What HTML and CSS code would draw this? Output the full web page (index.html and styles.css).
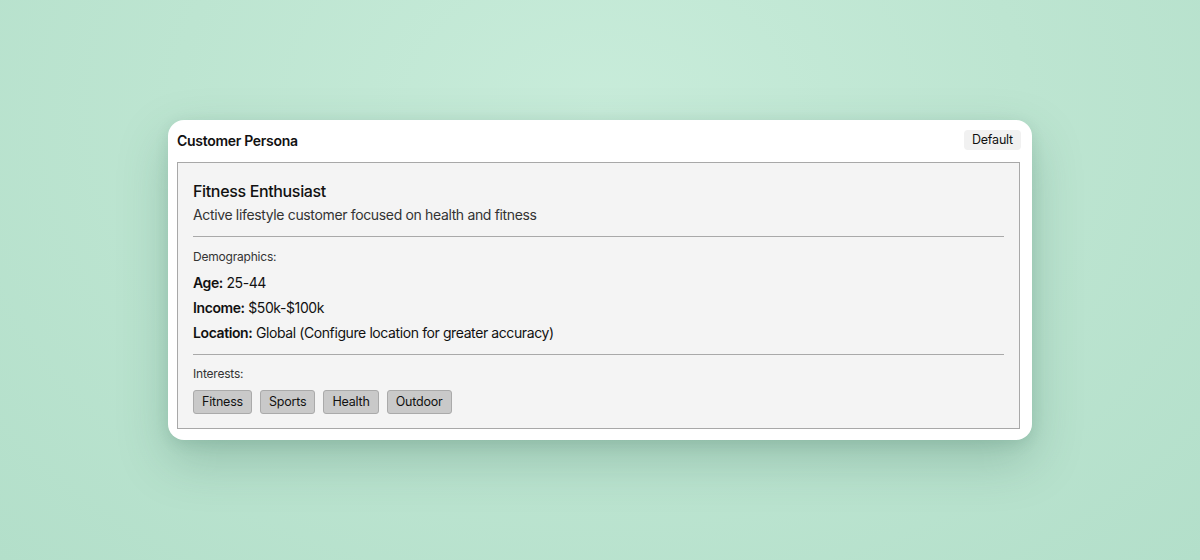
FILE: index.html
```html
<!DOCTYPE html>
<html>
<head>
<meta charset="utf-8">
<link rel="stylesheet" href="styles.css">
</head>
<body>
<div class="stage">
  <div class="card">
    <div class="card-head">
      <span class="title">Customer Persona</span>
      <span class="badge">Default</span>
    </div>
    <div class="panel">
      <div class="name">Fitness Enthusiast</div>
      <div class="desc">Active lifestyle customer focused on health and fitness</div>
      <hr class="rule">
      <div class="label">Demographics:</div>
      <div class="rows">
        <div class="row"><b>Age:</b> 25-44</div>
        <div class="row"><b>Income:</b> $50k-$100k</div>
        <div class="row"><b>Location:</b> Global (Configure location for greater accuracy)</div>
      </div>
      <hr class="rule">
      <div class="label">Interests:</div>
      <div class="tags">
        <span class="tag">Fitness</span>
        <span class="tag">Sports</span>
        <span class="tag">Health</span>
        <span class="tag">Outdoor</span>
      </div>
    </div>
  </div>
</div>
</body>
</html>
```
FILE: styles.css
```css
html, body { margin: 0; padding: 0; }
body {
  width: 1200px; height: 560px; overflow: hidden;
  font-family: Inter, "Noto Sans", sans-serif;
  color: #111;
  background: radial-gradient(ellipse at 50% 20%, #c8ecda 0%, #bde5d1 50%, #b3dfca 100%);
}
.stage {
  display: flex; justify-content: center;
  padding-top: 120px;
}
.card {
  width: 864px; height: 320px; box-sizing: border-box;
  background: #fff; border-radius: 16px;
  padding: 9px 12px 11px 9px;
  box-shadow: 0 20px 50px rgba(40, 90, 70, 0.25), 0 4px 14px rgba(40,90,70,0.12);
  display: flex; flex-direction: column;
}
.card-head {
  display: flex; justify-content: space-between; align-items: center;
  height: 22px; margin-bottom: 11px;
}
.title { font-size: 14px; font-weight: 600; letter-spacing: -0.3px; }
.badge {
  font-size: 12.5px; font-weight: 400; background: #f1f1f1;
  border-radius: 4px; padding: 2px 8px; line-height: 16px;
  margin-right: -1px; letter-spacing: -0.2px;
}
.panel {
  flex: 1; background: #f4f4f4; border: 1px solid #a8a8a8;
  padding: 17px 15px 0 15px;
}
.name { font-size: 16px; font-weight: 500; line-height: 22px; letter-spacing: -0.35px; }
.desc { font-size: 14px; color: #333; line-height: 20px; margin-top: 3px; letter-spacing: -0.35px; }
.rule { border: 0; border-top: 1px solid #a9a9a9; margin: 11px 0 11px; }
.label { font-size: 12px; color: #333; line-height: 18px; letter-spacing: -0.2px; }
.rows { display: flex; flex-direction: column; gap: 5px; margin-top: 7px; }
.row { font-size: 14px; line-height: 20px; letter-spacing: -0.4px; }
.row b { font-weight: 600; }
.rows + .rule { margin-top: 11px; margin-bottom: 10px; }
.tags { display: flex; gap: 8px; margin-top: 7px; }
.tag {
  font-size: 12.5px; font-weight: 400; line-height: 16px;
  background: #c9c9c9; border: 1px solid #aaa; border-radius: 3px;
  padding: 3px 8px; letter-spacing: -0.2px;
}
```
